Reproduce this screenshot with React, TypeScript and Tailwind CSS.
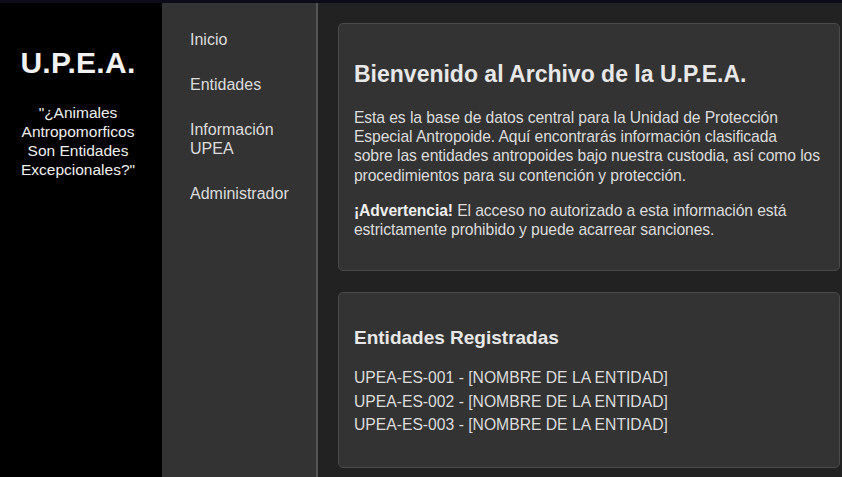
import React from "react";

const font = { fontFamily: '"Liberation Sans", Arial, sans-serif' };

export default function App() {
  return (
    <div className="w-[842px] h-[477px] overflow-hidden flex flex-col bg-[#222222]" style={font}>
      <div className="h-[3px] shrink-0 bg-[#0c0c18]" />
      <div className="flex flex-1 min-h-0">
        <aside className="w-[162px] shrink-0 bg-black text-white text-center flex flex-col items-center pt-[44px]">
          <h1 className="text-[30px] leading-[32px] font-bold text-[#f2f2f2] tracking-[0.3px] pr-[6px]">U.P.E.A.</h1>
          <p className="mt-[24px] text-[15.5px] leading-[19px] text-[#f0f0f0] pl-[12px] pr-[18px]">
            "¿Animales Antropomorficos Son Entidades Excepcionales?"
          </p>
        </aside>
        <nav className="w-[154px] shrink-0 bg-[#333333] pt-[27px] pl-[28px] pr-[22px] flex flex-col gap-[26px] text-[16px] leading-[19px] text-[#dddddd]">
          <span>Inicio</span>
          <span>Entidades</span>
          <span>Información UPEA</span>
          <span>Administrador</span>
        </nav>
        <div className="w-[2px] shrink-0 bg-[#555555]" />
        <main className="flex-1 min-w-0 pt-[20px] pl-[20px] pr-[2px] flex flex-col gap-[21px]">
          <section className="bg-[#333333] border border-[#4a4a4a] rounded-[5px] pl-[15px] pr-[8px] py-[15px]">
            <h2 className="text-[23px] leading-[28px] font-bold text-[#e8e8e8] mt-[21px] mb-[20px]">
              Bienvenido al Archivo de la U.P.E.A.
            </h2>
            <p className="text-[15.7px] leading-[19.2px] text-[#dddddd] mb-[16px] tracking-[-0.1px]">
              Esta es la base de datos central para la Unidad de Protección Especial Antropoide. Aquí encontrarás información clasificada
              <br />
              sobre las entidades antropoides bajo nuestra custodia, así como los procedimientos para su contención y protección.
            </p>
            <p className="text-[15.7px] leading-[19.2px] text-[#dddddd] mb-[16px] tracking-[-0.1px] pr-[30px]">
              <strong className="text-[#eeeeee]">¡Advertencia!</strong> El acceso no autorizado a esta información está estrictamente prohibido y puede acarrear sanciones.
            </p>
          </section>
          <section className="bg-[#333333] border border-[#4a4a4a] rounded-[5px] px-[15px] pt-[15px] pb-[13px]">
            <h3 className="text-[19px] leading-[22px] font-bold text-[#e8e8e8] mt-[19px] mb-[17px]">
              Entidades Registradas
            </h3>
            <ul className="text-[15.7px] leading-[19.5px] text-[#dddddd] mb-[17px]">
              <li className="py-[2px]">UPEA-ES-001 - [NOMBRE DE LA ENTIDAD]</li>
              <li className="py-[2px]">UPEA-ES-002 - [NOMBRE DE LA ENTIDAD]</li>
              <li className="py-[2px]">UPEA-ES-003 - [NOMBRE DE LA ENTIDAD]</li>
            </ul>
          </section>
        </main>
      </div>
    </div>
  );
}
